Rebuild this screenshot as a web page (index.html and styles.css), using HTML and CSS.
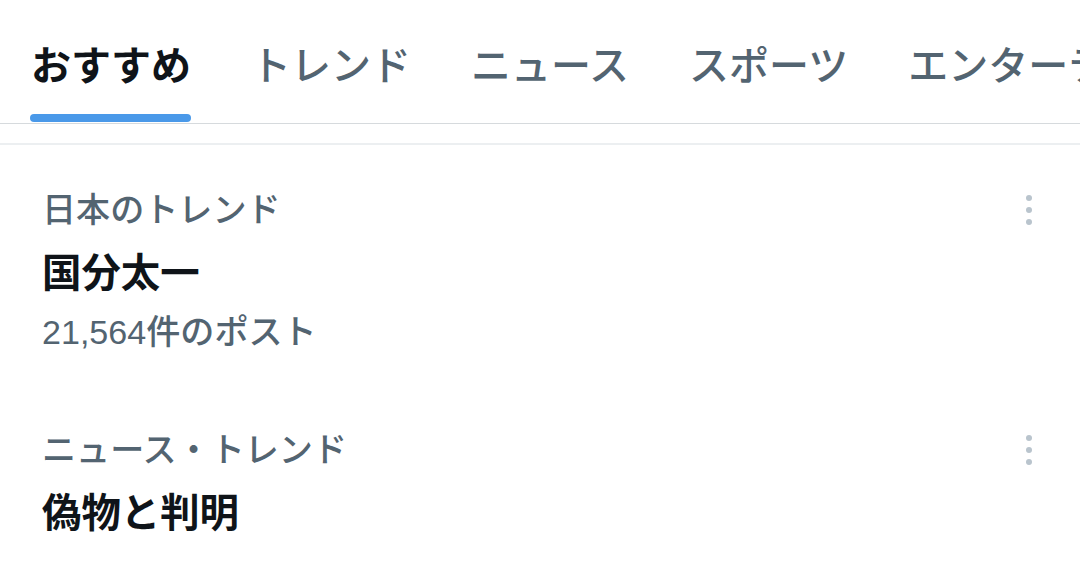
FILE: index.html
```html
<!DOCTYPE html>
<html lang="ja">
<head>
<meta charset="utf-8">
<title>話題を検索</title>
<link rel="stylesheet" href="styles.css">
</head>
<body>
<nav class="tabs">
  <div class="tab active"><span class="label">おすすめ</span><span class="bar"></span></div>
  <div class="tab"><span class="label">トレンド</span></div>
  <div class="tab"><span class="label">ニュース</span></div>
  <div class="tab"><span class="label">スポーツ</span></div>
  <div class="tab"><span class="label">エンターテイメント</span></div>
</nav>
<div class="sep"></div>
<main class="trends">
  <article class="trend">
    <div class="meta-row">
      <span class="meta">日本のトレンド</span>
      <svg class="more" width="8" height="32" viewBox="0 0 8 32" aria-hidden="true"><circle cx="4" cy="4" r="3"/><circle cx="4" cy="16" r="3"/><circle cx="4" cy="28" r="3"/></svg>
    </div>
    <div class="name">国分太一</div>
    <div class="count">21,564件のポスト</div>
  </article>
  <article class="trend">
    <div class="meta-row">
      <span class="meta">ニュース・トレンド</span>
      <svg class="more" width="8" height="32" viewBox="0 0 8 32" aria-hidden="true"><circle cx="4" cy="4" r="3"/><circle cx="4" cy="16" r="3"/><circle cx="4" cy="28" r="3"/></svg>
    </div>
    <div class="name">偽物と判明</div>
  </article>
</main>
</body>
</html>
```
FILE: styles.css
```css
html, body {
  margin: 0;
  padding: 0;
  background: #ffffff;
  overflow: hidden;
}
body {
  width: 1080px;
  height: 580px;
  font-family: "Liberation Sans", "Noto Sans CJK JP", sans-serif;
  color: #0f1419;
}
.tabs {
  display: flex;
  gap: 60px;
  padding-left: 31px;
  height: 123px;
  border-bottom: 1px solid #d6dadd;
  white-space: nowrap;
  overflow: hidden;
}
.tab {
  display: flex;
  flex-direction: column;
  flex: none;
  padding-top: 40px;
}
.label {
  font-size: 40px;
  line-height: 52px;
  font-weight: 500;
  color: #536471;
}
.tab.active .label {
  font-weight: 700;
  color: #0f1419;
}
.bar {
  margin-top: auto;
  margin-bottom: 1px;
  margin-left: -1px;
  height: 8px;
  border-radius: 4px;
  background: #4a99e9;
}
.sep {
  margin-top: 19px;
  height: 2px;
  background: #eceff1;
}
.trend {
  padding: 44px 0 32px 42px;
}
.meta-row {
  display: flex;
  align-items: center;
  justify-content: space-between;
  padding-right: 47px;
}
.meta {
  font-size: 34.1px;
  line-height: 42px;
  font-weight: 500;
  color: #536471;
}
.more {
  fill: #b9c4cd;
  display: block;
}
.name {
  margin-top: 16px;
  font-size: 39.4px;
  line-height: 52px;
  font-weight: 700;
  color: #0f1419;
}
.count {
  margin-top: 12px;
  font-size: 34.1px;
  line-height: 42px;
  font-weight: 500;
  color: #536471;
}
```
